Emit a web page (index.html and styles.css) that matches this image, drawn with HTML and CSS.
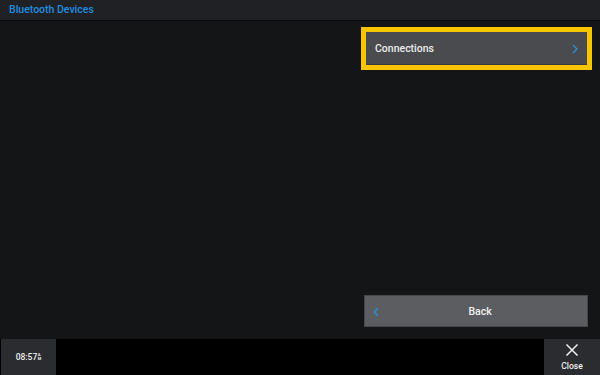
FILE: index.html
```html
<!DOCTYPE html>
<html>
<head>
<meta charset="utf-8">
<link rel="stylesheet" href="styles.css">
</head>
<body>
<div class="app">
  <header class="header"><span class="title">Bluetooth Devices</span></header>
  <main class="main">
    <div class="side">
      <div class="focus">
        <div class="item">
          <span class="label">Connections</span>
          <svg class="chev" width="6" height="10" viewBox="0 0 6 10"><path d="M1 1 L5 5 L1 9" fill="none" stroke="#2a8fd8" stroke-width="1.3"/></svg>
        </div>
      </div>
      <div class="back">
        <svg class="chev-back" width="6" height="10" viewBox="0 0 6 10"><path d="M5 1 L1 5 L5 9" fill="none" stroke="#2a8fd8" stroke-width="1.3"/></svg>
        <span class="back-label">Back</span>
      </div>
    </div>
  </main>
  <footer class="footer">
    <div class="clock"><span class="time">08:57</span><span class="ampm"><span>A</span><span>M</span></span></div>
    <div class="close">
      <svg width="14" height="14" viewBox="0 0 14 14"><path d="M1.5 1.5 L12.5 12.5 M12.5 1.5 L1.5 12.5" stroke="#f0f0f0" stroke-width="1.5"/></svg>
      <span class="close-label">Close</span>
    </div>
  </footer>
</div>
</body>
</html>
```
FILE: styles.css
```css
html, body {
  margin: 0;
  padding: 0;
  background: #141517;
  font-family: Roboto, "Liberation Sans", sans-serif;
}
.app {
  width: 600px;
  height: 375px;
  display: flex;
  flex-direction: column;
  overflow: hidden;
}
.header {
  height: 20px;
  background: #202124;
  display: flex;
  align-items: center;
  padding-left: 9px;
  box-shadow: 0 1px 0 #0a0b0c, 0 2px 0 #101113;
  position: relative;
  z-index: 1;
}
.title {
  color: #1e8fe0;
  font-size: 10.5px;
  font-weight: 500;
  line-height: 1;
  padding-top: 1px;
}
.main {
  flex: 1;
  display: flex;
  justify-content: flex-end;
  padding: 7px 8px 12px 0;
}
.side {
  width: 231px;
  display: flex;
  flex-direction: column;
  justify-content: space-between;
}
.focus {
  border: 5px solid #f7c600;
  height: 33px;
}
.item {
  height: 33px;
  background: #4a4b4f;
  box-shadow: inset 0 -1px 0 #3a3b3f;
  display: flex;
  align-items: center;
  justify-content: space-between;
  padding: 0 9px 0 9px;
}
.label {
  color: #ececec;
  font-size: 10.5px;
  font-weight: 500;
}
.chev { margin-top: 1px; }
.back {
  margin: 0 4px 0 3px;
  height: 30px;
  background: #5c5d61;
  border: 1px solid #46474b;
  position: relative;
  display: flex;
  align-items: center;
  justify-content: center;
}
.chev-back {
  position: absolute;
  left: 8px;
  top: 11px;
}
.back-label {
  color: #f2f2f2;
  font-size: 10.5px;
  font-weight: 500;
  margin-left: 8px;
}
.footer {
  height: 36px;
  background: #000;
  display: flex;
  justify-content: space-between;
}
.clock {
  margin-left: 1px;
  width: 55px;
  background: #2b2c30;
  display: flex;
  align-items: center;
  justify-content: center;
  color: #f0f0f0;
}
.time {
  font-size: 8.5px;
  font-weight: 500;
}
.ampm {
  display: flex;
  flex-direction: column;
  font-size: 4px;
  line-height: 4px;
  margin-left: 0.5px;
  font-weight: 700;
}
.close {
  width: 56px;
  background: #2b2c30;
  display: flex;
  flex-direction: column;
  align-items: center;
  padding-top: 4px;
  box-sizing: border-box;
}
.close-label {
  color: #f0f0f0;
  font-size: 8.5px;
  font-weight: 500;
  margin-top: 4px;
}
```
